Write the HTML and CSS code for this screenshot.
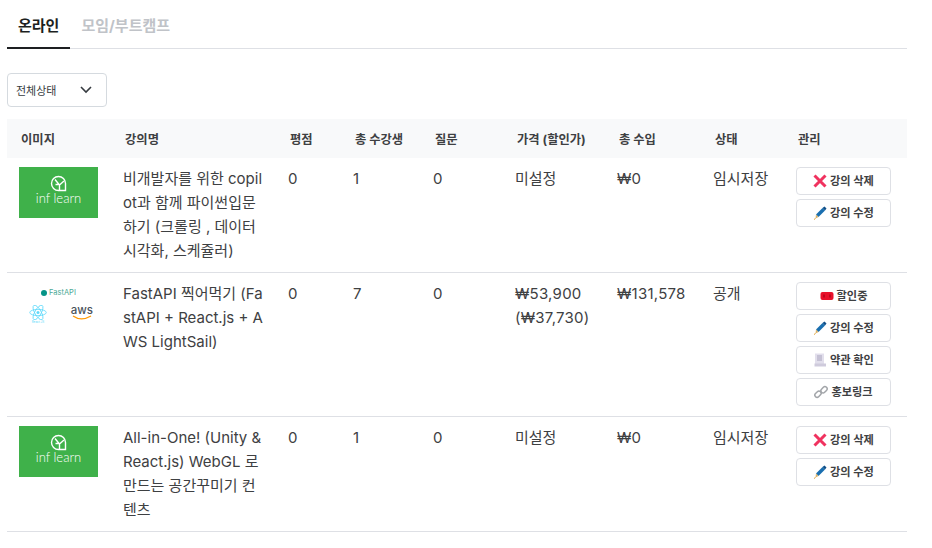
FILE: index.html
```html
<!DOCTYPE html>
<html lang="ko">
<head>
  <meta charset="UTF-8">
  <title>강의 관리</title>
  <link rel="stylesheet" href="styles.css">
</head>
<body>
  <svg class="defs" width="0" height="0">
    <symbol id="logo-inflearn" viewBox="0 0 79 51">
      <g fill="none" stroke="#fff" stroke-width="1.4">
        <path d="M39.5 9.5a7 7 0 1 0 0 14h7v-7a7 7 0 0 0-7-7z"/>
        <path d="M36 12.5l4.5 5.5v5M45 14l-4.500 4M36.500 17.500h3"/>
      </g>
    </symbol>
    <symbol id="ico-x" viewBox="0 0 14 14">
      <path d="M1.500 1.500l11 11M12.500 1.500l-11 11" stroke="#f0325f" stroke-width="3" fill="none"/>
    </symbol>
    <symbol id="ico-pen" viewBox="0 0 14 14">
      <path d="M3 8.500l6.500-6.500 2.500 2.500-6.500 6.500z" fill="#1a6fb0"/>
      <path d="M9.500 2l2-1.500 2 2-1.500 2z" fill="#0f4f88"/>
      <path d="M3 8.500l2.500 2.500-3 1.500z" fill="#d9b26a"/>
      <path d="M2.500 12.500l-1.500 1" stroke="#e0a030" fill="none"/>
    </symbol>
    <symbol id="ico-sale" viewBox="0 0 14 14">
      <rect x="0.500" y="3" width="13" height="8" rx="2" fill="#e8102a"/>
      <path d="M4 5.500v3M10 5.500v3" stroke="#a30018" stroke-width="1.200"/>
    </symbol>
    <symbol id="ico-scroll" viewBox="0 0 14 14">
      <path d="M2 .5h9v12.500H2z" fill="#e2dfec"/>
      <path d="M4 3h5M4 5h5M4 7h5" stroke="#a8a3bc"/>
      <path d="M1.500 10.500h11.500v3H1.500z" fill="#cfcbdc"/>
    </symbol>
    <symbol id="ico-link" viewBox="0 0 14 14">
      <g fill="none" stroke="#a2a5a9" stroke-width="1.500">
        <rect x="0.500" y="7" width="7" height="4.400" rx="2.200" transform="rotate(-45 4 9.200)"/>
        <rect x="6.500" y="2.600" width="7" height="4.400" rx="2.200" transform="rotate(-45 10 4.800)"/>
      </g>
    </symbol>
  </svg>

  <div class="tabs">
    <a class="tab on">온라인</a>
    <a class="tab">모임/부트캠프</a>
  </div>

  <div class="filter">
    <span>전체상태</span>
    <svg width="12" height="8" viewBox="0 0 12 8"><path d="M1 1l5 5 5-5" fill="none" stroke="#363b40" stroke-width="1.600"/></svg>
  </div>

  <table class="courses">
    <colgroup>
      <col class="c-img"><col class="c-name"><col class="c-rate"><col class="c-stud"><col class="c-qna">
      <col class="c-price"><col class="c-rev"><col class="c-state"><col class="c-admin">
    </colgroup>
    <thead>
      <tr>
        <th>이미지</th><th>강의명</th><th>평점</th><th>총 수강생</th><th>질문</th>
        <th>가격 (할인가)</th><th>총 수입</th><th>상태</th><th>관리</th>
      </tr>
    </thead>
    <tbody>
      <tr>
        <td>
          <div class="thumb green">
            <svg class="leaf" width="79" height="51"><use href="#logo-inflearn"/></svg>
            <span class="wordmark">inf learn</span>
          </div>
        </td>
        <td>비개발자를 위한 copilot과 함께 파이썬입문하기 (크롤링 , 데이터 시각화, 스케쥴러)</td>
        <td class="num">0</td><td class="num">1</td><td class="num">0</td><td>미설정</td><td class="num">₩0</td><td>임시저장</td>
        <td>
          <div class="btns">
            <a class="btn"><svg width="14" height="14"><use href="#ico-x"/></svg>강의 삭제</a>
            <a class="btn"><svg width="14" height="14"><use href="#ico-pen"/></svg>강의 수정</a>
          </div>
        </td>
      </tr>
      <tr>
        <td>
          <div class="thumb stack">
            <div class="fastapi"><i></i>FastAPI</div>
            <div class="stack-row">
              <div class="react">
                <svg width="18" height="15" viewBox="0 0 24 20">
                  <g fill="none" stroke="#61dafb" stroke-width="1.100">
                    <ellipse cx="12" cy="10" rx="11" ry="4.200"/>
                    <ellipse cx="12" cy="10" rx="11" ry="4.200" transform="rotate(60 12 10)"/>
                    <ellipse cx="12" cy="10" rx="11" ry="4.200" transform="rotate(120 12 10)"/>
                  </g>
                  <circle cx="12" cy="10" r="2" fill="#61dafb"/>
                </svg>
                <span>React JS</span>
              </div>
              <div class="aws">
                <span>aws</span>
                <svg width="20" height="5" viewBox="0 0 20 5"><path d="M1 1c5 3.500 12 3.500 18 0" fill="none" stroke="#f90" stroke-width="1.300"/></svg>
              </div>
            </div>
          </div>
        </td>
        <td>FastAPI 찍어먹기 (FastAPI + React.js + AWS LightSail)</td>
        <td class="num">0</td><td class="num">7</td><td class="num">0</td><td class="num">₩53,900<br>(₩37,730)</td><td class="num">₩131,578</td><td>공개</td>
        <td>
          <div class="btns">
            <a class="btn"><svg width="14" height="14"><use href="#ico-sale"/></svg>할인중</a>
            <a class="btn"><svg width="14" height="14"><use href="#ico-pen"/></svg>강의 수정</a>
            <a class="btn"><svg width="14" height="14"><use href="#ico-scroll"/></svg>약관 확인</a>
            <a class="btn"><svg width="14" height="14"><use href="#ico-link"/></svg>홍보링크</a>
          </div>
        </td>
      </tr>
      <tr>
        <td>
          <div class="thumb green">
            <svg class="leaf" width="79" height="51"><use href="#logo-inflearn"/></svg>
            <span class="wordmark">inf learn</span>
          </div>
        </td>
        <td>All-in-One! (Unity &amp; React.js) WebGL 로 만드는 공간꾸미기 컨텐츠</td>
        <td class="num">0</td><td class="num">1</td><td class="num">0</td><td>미설정</td><td class="num">₩0</td><td>임시저장</td>
        <td>
          <div class="btns">
            <a class="btn"><svg width="14" height="14"><use href="#ico-x"/></svg>강의 삭제</a>
            <a class="btn"><svg width="14" height="14"><use href="#ico-pen"/></svg>강의 수정</a>
          </div>
        </td>
      </tr>
    </tbody>
  </table>
</body>
</html>
```

FILE: styles.css
```css
body {
  margin: 0;
  padding: 0 25px 0 7px;
  background: #fff;
  color: #3e4042;
  font-family: Inter, "Noto Sans CJK KR", sans-serif;
}
.defs {
  display: none;
}
.tabs {
  display: flex;
  height: 49px;
  box-sizing: border-box;
  border-bottom: 1px solid #dee0e5;
}
.tab {
  height: 49px;
  box-sizing: border-box;
  padding: 15px 11px 0;
  font-size: 15px;
  line-height: 22px;
  font-weight: 700;
  color: #c0c3c8;
}
.tab.on {
  color: #1d1f21;
  border-bottom: 2px solid #1d1f21;
}
.filter {
  display: flex;
  align-items: center;
  justify-content: space-between;
  width: 100px;
  height: 34px;
  box-sizing: border-box;
  margin: 24px 0 12px;
  padding: 0 14px 0 8px;
  border: 1px solid #d5dadf;
  border-radius: 4px;
  font-size: 11px;
  color: #363b40;
}
.courses {
  width: 900px;
  table-layout: fixed;
  border-collapse: collapse;
}
.c-img { width: 104px; }
.c-name { width: 165px; }
.c-rate { width: 65px; }
.c-stud { width: 80px; }
.c-qna { width: 82px; }
.c-price { width: 102px; }
.c-rev { width: 96px; }
.c-state { width: 83px; }
.c-admin { width: 123px; }
th {
  height: 39px;
  padding: 0 0 0 14px;
  background: #f8f9fa;
  font-size: 12.3px;
  font-weight: 700;
  text-align: left;
  color: #3e4042;
}
td {
  padding: 9px 12px 9px;
  border-bottom: 1px solid #dee0e5;
  font-size: 15px;
  line-height: 24px;
  vertical-align: top;
  word-break: break-all;
  color: #3e4042;
}
td.num {
  letter-spacing: 0.25px;
}
.thumb {
  width: 79px;
  height: 51px;
  box-sizing: border-box;
  position: relative;
}
.thumb.green {
  background: #3fb14a;
}
.leaf {
  position: absolute;
  left: 0;
  top: 0;
}
.wordmark {
  position: absolute;
  left: 0;
  right: 0;
  top: 24px;
  text-align: center;
  color: #fff;
  font-family: Lato, sans-serif;
  font-size: 13px;
  line-height: 14px;
  font-weight: 300;
}
.stack {
  padding-top: 6px;
}
.fastapi {
  display: flex;
  justify-content: center;
  align-items: center;
  gap: 2px;
  font-size: 7.5px;
  line-height: 10px;
  color: #4aa896;
}
.fastapi i {
  width: 6px;
  height: 6px;
  border-radius: 50%;
  background: #059487;
}
.stack-row {
  display: flex;
  justify-content: space-between;
  margin-top: 7px;
  padding: 0 5px 0 10px;
}
.react {
  display: flex;
  flex-direction: column;
  align-items: center;
}
.react span {
  font-size: 3px;
  line-height: 4px;
  color: #61dafb;
}
.aws {
  display: flex;
  flex-direction: column;
  align-items: center;
}
.aws span {
  font-size: 11.5px;
  line-height: 10px;
  font-weight: 500;
  color: #4a535c;
}
.aws svg {
  display: block;
}
.btns {
  display: flex;
  flex-direction: column;
  gap: 4px;
  width: 95px;
  margin-bottom: 1px;
}
.btn {
  display: flex;
  align-items: center;
  justify-content: center;
  gap: 3px;
  height: 28px;
  box-sizing: border-box;
  border: 1px solid #dee0e5;
  border-radius: 4px;
  font-size: 11.2px;
  font-weight: 700;
  color: #3e4042;
}
```
